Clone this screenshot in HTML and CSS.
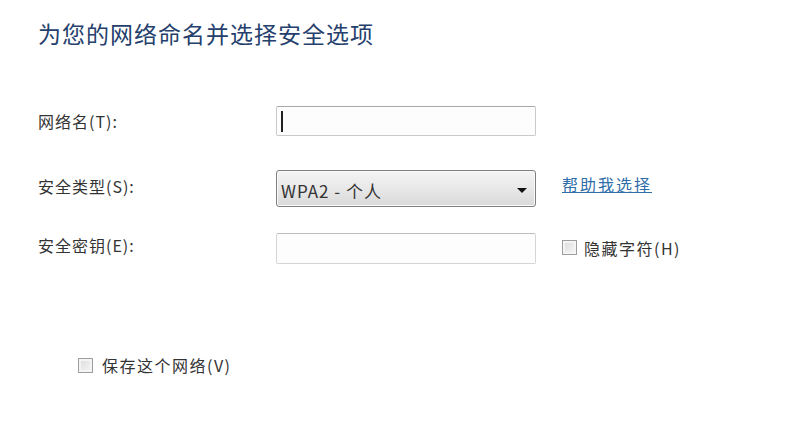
FILE: index.html
```html
<!DOCTYPE html>
<html lang="zh-CN">
<head>
    <meta charset="UTF-8">
    <title>手动连接到无线网络</title>
    <link rel="stylesheet" href="styles.css">
</head>
<body>
    <div class="page">
        <h1 class="title">为您的网络命名并选择安全选项</h1>

        <div class="form">
            <div class="row row_name">
                <label class="label">网络名(T):</label>
                <div class="field">
                    <span class="caret"></span>
                </div>
            </div>

            <div class="row row_type">
                <label class="label">安全类型(S):</label>
                <div class="select">
                    <span class="select_text">WPA2 - 个人</span>
                    <span class="arrow"></span>
                </div>
                <a class="help" href="#">帮助我选择</a>
            </div>

            <div class="row row_key">
                <label class="label">安全密钥(E):</label>
                <div class="field field_empty"></div>
                <div class="check">
                    <span class="box"></span>
                    <span class="check_text">隐藏字符(H)</span>
                </div>
            </div>
        </div>

        <div class="check save">
            <span class="box"></span>
            <span class="check_text">保存这个网络(V)</span>
        </div>
    </div>
</body>
</html>
```

FILE: styles.css
```css
body {
    margin: 0;
    background: #fff;
    font-family: "Noto Sans CJK SC", "Liberation Sans", sans-serif;
    color: #3c3c3c;
}

.page {
    padding: 20px 0 0 38px;
    width: 762px;
    height: 412px;
}

.title {
    margin: 0;
    font-size: 23px;
    line-height: 26px;
    font-weight: normal;
    letter-spacing: 1px;
    color: #25406c;
}

.form {
    margin-top: 60px;
}

.row {
    display: flex;
    align-items: center;
}

.row_name {
    height: 30px;
    margin-bottom: 34px;
}

.row_type {
    height: 37px;
    margin-bottom: 26px;
}

.row_key {
    height: 31px;
}

.label {
    width: 238px;
    font-size: 16px;
    letter-spacing: 1px;
    color: #333;
}

.row_type .label {
    margin-top: -6px;
}

.row_key .label {
    margin-top: -8px;
}

.field {
    box-sizing: border-box;
    width: 260px;
    height: 100%;
    border: 1px solid #c9c9c9;
    border-top-color: #a9a9a9;
    border-radius: 2px;
    background: #fdfdfd;
    display: flex;
    align-items: center;
    padding-left: 4px;
}

.field_empty {
    border-color: #d6d6d6;
    border-top-color: #bcbcbc;
}

.caret {
    width: 2px;
    height: 21px;
    background: #222;
}

.select {
    box-sizing: border-box;
    width: 260px;
    height: 100%;
    border: 1px solid #7f7f7f;
    border-radius: 3px;
    background: linear-gradient(#f4f4f4, #e8e8e8 50%, #d9d9d9);
    box-shadow: inset 0 0 0 1px #fafafa;
    display: flex;
    align-items: center;
    justify-content: space-between;
    padding: 3px 8px 0 4px;
}

.select_text {
    font-size: 17px;
    color: #333;
    letter-spacing: 1px;
}

.arrow {
    width: 0;
    height: 0;
    border-left: 5px solid transparent;
    border-right: 5px solid transparent;
    border-top: 5px solid #111;
}

.help {
    margin: -10px 0 0 26px;
    font-size: 16px;
    letter-spacing: 2px;
    color: #2f6ea8;
    text-decoration: underline;
}

.check {
    display: flex;
    align-items: center;
    font-size: 16px;
    letter-spacing: 1.5px;
    color: #333;
}

.row_key .check {
    margin: -2px 0 0 26px;
}

.box {
    box-sizing: border-box;
    width: 15px;
    height: 15px;
    border: 1px solid #9d9d9d;
    background: linear-gradient(135deg, #dcdcdc, #f6f6f6);
    box-shadow: inset 0 0 0 2px #f4f4f4;
    margin-right: 7px;
}

.save {
    margin: 87px 0 0 40px;
    height: 28px;
}

.save .box {
    margin-right: 9px;
}
```
